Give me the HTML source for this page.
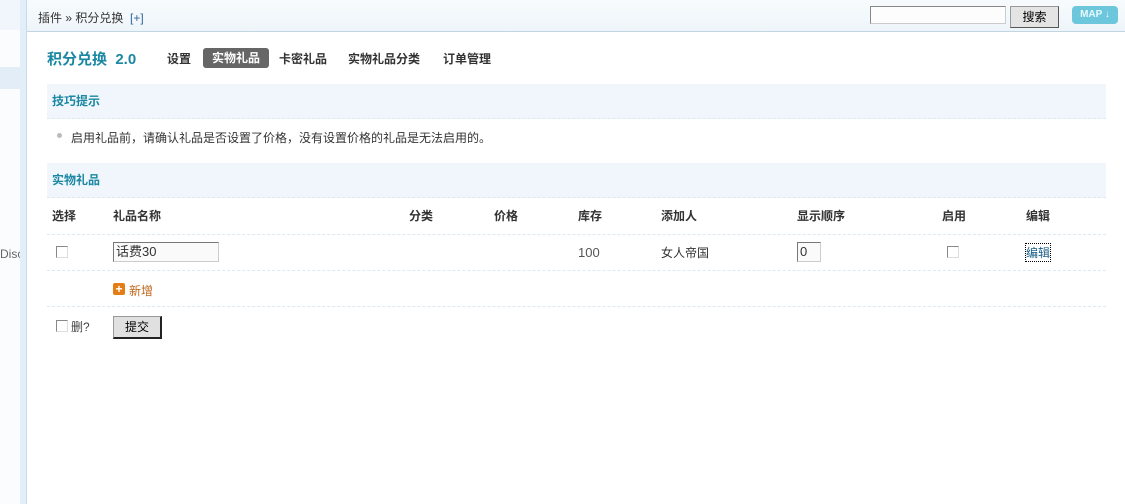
<!DOCTYPE html>
<html><head><meta charset="utf-8"><style>
body{margin:0;width:1125px;height:504px;overflow:hidden;background:#fff;font-family:"Liberation Sans","Noto Sans CJK SC",sans-serif;font-size:12px;color:#333;position:relative}
.abs{position:absolute}
.side{left:0;top:0;width:20px;height:504px;background:#fafcfe}
.strip{left:20px;top:0;width:6px;height:504px;background:#e2eef8;border-right:1px solid #c9dbe8}
.hdr{left:27px;top:0;width:1098px;height:31px;background:linear-gradient(#f7fbfd,#eef5fa);border-bottom:1px solid #c2d6e2}
.b{font-weight:bold}
.sec{left:47px;width:1059px;height:34px;background:#f0f6fb;border-bottom:1px dashed #dde8f0;color:#1a87a3;font-weight:bold;line-height:34px;text-indent:5px}
.dash{left:47px;width:1059px;border-top:1px dashed #dde8f0;height:0}
.cb{width:10px;height:10px;border:1px solid #888;border-right-color:#ddd;border-bottom-color:#ddd;background:#fff}
.th{top:207px;font-weight:bold;color:#333}
</style></head><body>
<div class="abs side"></div>
<div class="abs" style="left:0;top:0;width:20px;height:30px;background:#f0f6fb"></div>
<div class="abs" style="left:0;top:67px;width:20px;height:22px;background:#e3edf7"></div>
<div class="abs strip"></div>
<div class="abs" style="left:0;top:247px;color:#666;font-size:12px">Disc</div>
<div class="abs" style="left:20px;top:240px;width:6px;height:30px;background:#e2eef8"></div>
<div class="abs hdr"></div>
<div class="abs" style="left:38px;top:9px;color:#333">插件 » 积分兑换 &nbsp;<span style="color:#336699">[+]</span></div>
<div class="abs" style="left:870px;top:6px;width:134px;height:16px;border:1px solid #888;border-right-color:#ccc;border-bottom-color:#ccc;background:#fdfdfd"></div>
<div class="abs" style="left:1010px;top:6px;width:47px;height:20px;border:1px solid #999;border-right-color:#555;border-bottom-color:#555;background:#e4e4e4;text-align:center;line-height:20px;color:#000">搜索</div>
<div class="abs" style="left:1072px;top:6px;width:46px;height:18px;border-radius:4px;background:#6cc7dc;color:#e8fbff;font-size:10px;font-weight:bold;text-align:center;line-height:18px">MAP ↓</div>

<div class="abs b" style="left:47px;top:48px;font-size:15px;color:#1a87a3">积分兑换 &nbsp;2.0</div>
<div class="abs b" style="left:167px;top:50px;color:#333">设置</div>
<div class="abs b" style="left:203px;top:48px;width:66px;height:20px;border-radius:3px;background:#666;color:#fff;text-align:center;line-height:20px">实物礼品</div>
<div class="abs b" style="left:279px;top:50px">卡密礼品</div>
<div class="abs b" style="left:348px;top:50px">实物礼品分类</div>
<div class="abs b" style="left:443px;top:50px">订单管理</div>

<div class="abs sec" style="top:84px">技巧提示</div>
<div class="abs" style="left:57px;top:133px;width:5px;height:5px;border-radius:3px;background:#bbb"></div>
<div class="abs" style="left:71px;top:129px">启用礼品前，请确认礼品是否设置了价格，没有设置价格的礼品是无法启用的。</div>
<div class="abs sec" style="top:163px">实物礼品</div>

<div class="abs th" style="left:52px">选择</div>
<div class="abs th" style="left:113px">礼品名称</div>
<div class="abs th" style="left:409px">分类</div>
<div class="abs th" style="left:494px">价格</div>
<div class="abs th" style="left:578px">库存</div>
<div class="abs th" style="left:661px">添加人</div>
<div class="abs th" style="left:797px">显示顺序</div>
<div class="abs th" style="left:942px">启用</div>
<div class="abs th" style="left:1026px">编辑</div>
<div class="abs dash" style="top:234px"></div>

<div class="abs cb" style="left:56px;top:246px"></div>
<div class="abs" style="left:113px;top:242px;width:104px;height:18px;border:1px solid #777;border-right-color:#ccc;border-bottom-color:#ccc;background:#fafafa;line-height:18px;text-indent:2px;font-size:13px">话费30</div>
<div class="abs" style="left:578px;top:245px;color:#555;font-size:13px">100</div>
<div class="abs" style="left:661px;top:244px">女人帝国</div>
<div class="abs" style="left:797px;top:242px;width:22px;height:18px;border:1px solid #777;border-right-color:#ccc;border-bottom-color:#ccc;background:#fafafa;line-height:18px;text-indent:2px;font-size:13px">0</div>
<div class="abs cb" style="left:947px;top:246px"></div>
<div class="abs" style="left:1026px;top:244px;color:#1a5e88;outline:1px dotted #000">编辑</div>
<div class="abs dash" style="top:270px"></div>

<div class="abs" style="left:113px;top:283px;width:12px;height:12px;border-radius:2px;background:#e57d16;color:#fff;font-weight:bold;font-size:12px;line-height:12px;text-align:center">+</div>
<div class="abs" style="left:129px;top:282px;color:#c0661a">新增</div>
<div class="abs dash" style="top:306px"></div>

<div class="abs cb" style="left:56px;top:320px"></div>
<div class="abs" style="left:71px;top:318px;color:#444">删?</div>
<div class="abs" style="left:113px;top:316px;width:46px;height:20px;border:1px solid #999;border-right:2px solid #222;border-bottom:2px solid #222;background:#e0e0e0;text-align:center;line-height:20px;color:#000">提交</div>
</body></html>
